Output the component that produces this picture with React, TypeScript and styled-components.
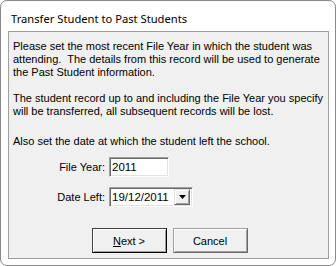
import React from "react";
import styled, { createGlobalStyle } from "styled-components";

const Global = createGlobalStyle`
  html, body { margin: 0; padding: 0; background: #ffffff; }
  * { box-sizing: border-box; }
`;

const Window = styled.div`
  width: 336px;
  height: 266px;
  border: 1px solid #8a8a8a;
  border-radius: 7px;
  background: #ffffff;
  display: flex;
  flex-direction: column;
  overflow: hidden;
`;

const TitleBar = styled.div`
  height: 30px;
  padding: 4px 0 0 10px;
  display: flex;
  align-items: center;
  font-family: "Noto Sans", "Liberation Sans", sans-serif;
  font-size: 11.2px;
  color: #000000;
`;

const Panel = styled.div`
  margin: 0 6px 0 7px;
  height: 228px;
  border: 1px solid #a0a0a0;
  background: #f0f0f0;
  padding: 8px 4px 0 4px;
  display: flex;
  flex-direction: column;
  font-family: "Liberation Sans", Tahoma, sans-serif;
  font-size: 11px;
  line-height: 13px;
  color: #000000;
`;

const Para = styled.p<{ $gap: number }>`
  margin: ${(p) => p.$gap}px 0 0 0;
`;

const Form = styled.div`
  margin-top: 9px;
  display: grid;
  grid-template-columns: 92px auto;
  column-gap: 4px;
  row-gap: 10px;
  align-items: center;
  justify-items: start;
`;

const Label = styled.label`
  justify-self: end;
  white-space: nowrap;
`;

const Sunken = styled.div<{ $w: number }>`
  width: ${(p) => p.$w}px;
  height: 20px;
  background: #ffffff;
  border-top: 1px solid #a0a0a0;
  border-left: 1px solid #a0a0a0;
  border-right: 1px solid #ffffff;
  border-bottom: 1px solid #ffffff;
  box-shadow: inset 1px 1px 0 #696969, inset -1px -1px 0 #e3e3e3;
  display: flex;
  align-items: center;
  padding: 0 0 0 2px;
`;

const FieldText = styled.span`
  flex: 1;
  padding-top: 1px;
  font-size: 11.5px;
`;

const DropButton = styled.div`
  width: 16px;
  height: 16px;
  margin-right: 2px;
  background: #f0f0f0;
  border-top: 1px solid #e3e3e3;
  border-left: 1px solid #e3e3e3;
  border-right: 1px solid #696969;
  border-bottom: 1px solid #696969;
  box-shadow: inset 1px 1px 0 #ffffff, inset -1px -1px 0 #a0a0a0;
  display: flex;
  align-items: center;
  justify-content: center;
`;

const ButtonRow = styled.div`
  margin-top: 21px;
  display: flex;
  justify-content: center;
  gap: 6px;
  padding-left: 2px;
`;

const Button = styled.div<{ $default?: boolean }>`
  width: 75px;
  height: 25px;
  background: #f0f0f0;
  display: flex;
  align-items: center;
  justify-content: center;
  border: 1px solid ${(p) => (p.$default ? "#404040" : "#a0a0a0")};
  border-right-color: ${(p) => (p.$default ? "#000000" : "#696969")};
  border-bottom-color: ${(p) => (p.$default ? "#000000" : "#696969")};
  box-shadow: ${(p) =>
    p.$default
      ? "inset 1px 1px 0 #ffffff, inset -1px -1px 0 #a0a0a0"
      : "inset 1px 1px 0 #ffffff, inset -1px -1px 0 #a0a0a0"};
  padding-top: 1px;
`;

const Mnemonic = styled.span`
  text-decoration: underline;
`;

export default function App() {
  return (
    <>
      <Global />
      <Window>
        <TitleBar>Transfer Student to Past Students</TitleBar>
        <Panel>
          <Para $gap={0}>
            Please set the most recent File Year in which the student was
            attending.&nbsp; The details from this record will be used to
            generate the Past Student information.
          </Para>
          <Para $gap={13}>
            The student record up to and including the File Year you specify
            will be transferred, all subsequent records will be lost.
          </Para>
          <Para $gap={17}>Also set the date at which the student left the school.</Para>
          <Form>
            <Label>File Year:</Label>
            <Sunken $w={60}>
              <FieldText>2011</FieldText>
            </Sunken>
            <Label>Date Left:</Label>
            <Sunken $w={84}>
              <FieldText>19/12/2011</FieldText>
              <DropButton>
                <svg width="7" height="4" viewBox="0 0 7 4">
                  <path d="M0 0H7L3.5 4Z" fill="#000" />
                </svg>
              </DropButton>
            </Sunken>
          </Form>
          <ButtonRow>
            <Button $default>
              <span>
                <Mnemonic>N</Mnemonic>ext &gt;
              </span>
            </Button>
            <Button>Cancel</Button>
          </ButtonRow>
        </Panel>
      </Window>
    </>
  );
}
